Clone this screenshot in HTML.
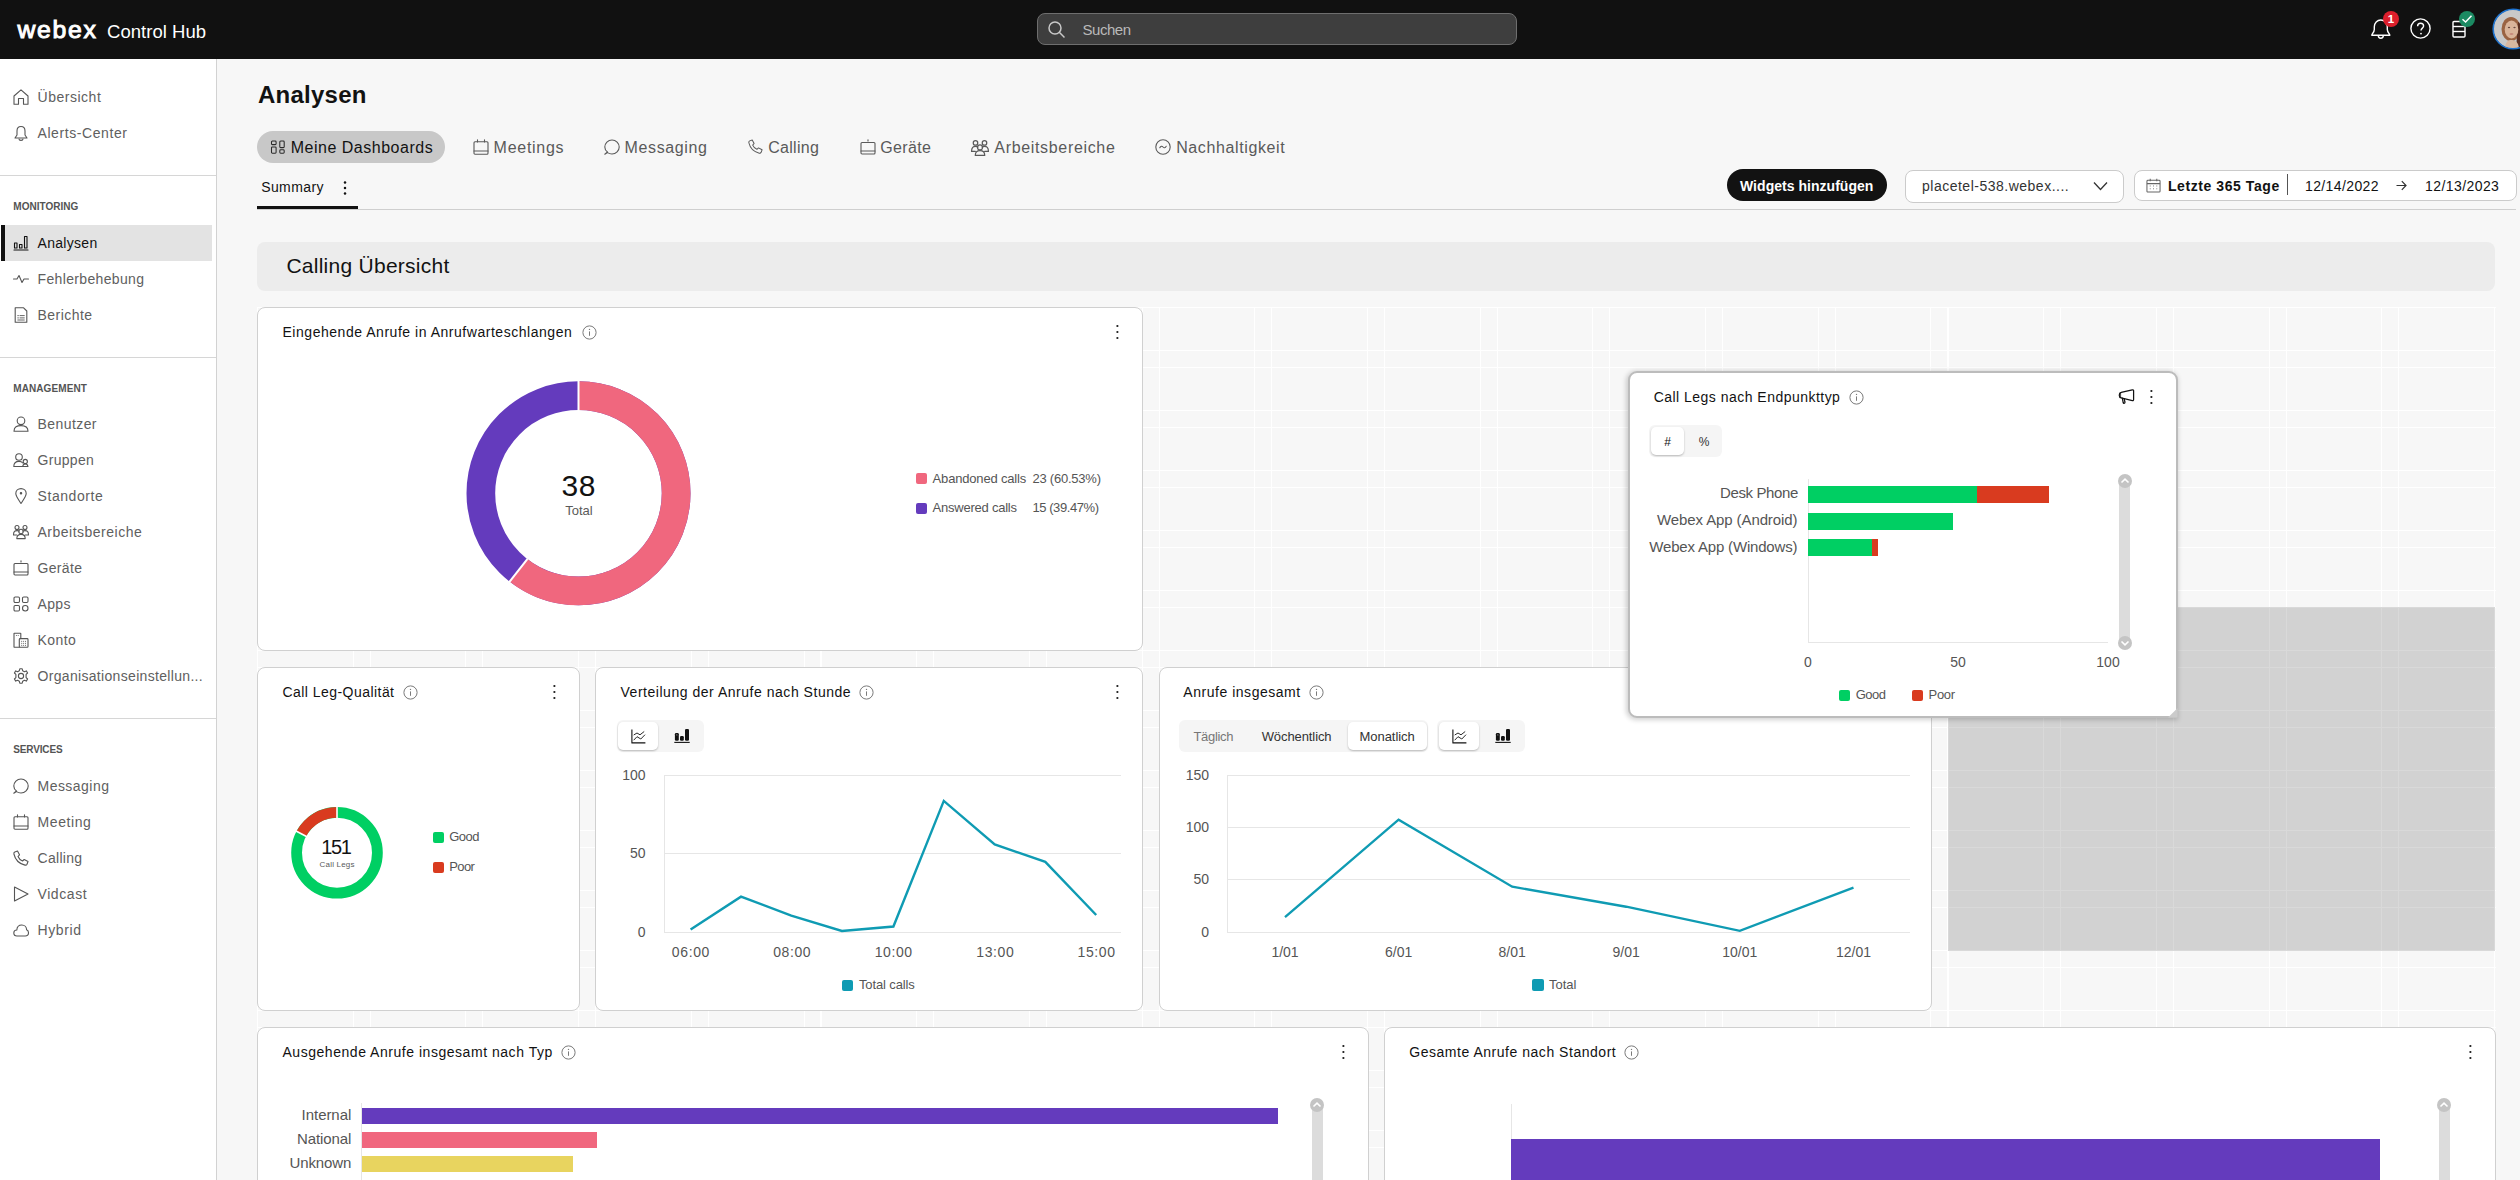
<!DOCTYPE html>
<html><head><meta charset="utf-8"><title>Webex Control Hub</title>
<style>
html,body{margin:0;padding:0;}
body{width:2520px;height:1180px;overflow:hidden;position:relative;background:#f7f7f7;font-family:"Liberation Sans",sans-serif;}
.t{position:absolute;white-space:nowrap;}
.a{position:absolute;box-sizing:border-box;}
svg{position:absolute;overflow:visible;}
</style></head><body>

<div class="a" style="left:0;top:0;width:2520px;height:59px;background:#111111;z-index:2"></div>
<div class="a" style="left:1037px;top:13px;width:480px;height:32px;background:#3e3e3e;border:1px solid #6e6e6e;border-radius:8px;z-index:3"></div>
<svg style="left:1048px;top:21px;z-index:4" width="18" height="17" viewBox="0 0 18 17"><circle cx="7" cy="7" r="6" fill="none" stroke="#c8c8c8" stroke-width="1.5"/><line x1="11.3" y1="11.3" x2="16.5" y2="16.5" stroke="#c8c8c8" stroke-width="1.5"/></svg>
<svg style="left:2370px;top:18px;z-index:4" width="22" height="22" viewBox="0 0 22 22">
<path d="M1.8 17.2 C1.8 16 4.3 14.2 4.3 11.5 L4.3 8.8 C4.3 4.8 7.2 2 10.8 2 C14.4 2 17.3 4.8 17.3 8.8 L17.3 11.5 C17.3 14.2 19.8 16 19.8 17.2 Z" fill="none" stroke="#fff" stroke-width="1.4" stroke-linejoin="round"/>
<path d="M8.3 17.6 C8.3 21.2 13.3 21.2 13.3 17.6" fill="none" stroke="#fff" stroke-width="1.4"/></svg>
<div class="a" style="left:2383px;top:11px;width:16px;height:16px;border-radius:50%;background:#dc1f2c;z-index:5"></div>
<svg style="left:2410px;top:18px;z-index:4" width="22" height="22" viewBox="0 0 22 22">
<circle cx="10.5" cy="10.5" r="9.6" fill="none" stroke="#fff" stroke-width="1.4"/>
<path d="M7.6 8.2 C7.6 6.3 9 5.2 10.6 5.2 C12.3 5.2 13.6 6.4 13.6 8 C13.6 10 11 10.3 11 12.6" fill="none" stroke="#fff" stroke-width="1.4"/>
<circle cx="11" cy="15.6" r="0.9" fill="#fff"/></svg>
<svg style="left:2452px;top:20px;z-index:4" width="15" height="19" viewBox="0 0 15 19">
<rect x="1" y="1.5" width="12" height="15.5" rx="1" fill="none" stroke="#fff" stroke-width="1.4"/>
<line x1="1" y1="6.5" x2="13" y2="6.5" stroke="#fff" stroke-width="1.4"/><line x1="1" y1="11.5" x2="13" y2="11.5" stroke="#fff" stroke-width="1.4"/></svg>
<div class="a" style="left:2459px;top:11px;width:16px;height:16px;border-radius:50%;background:#1b8a62;z-index:5"></div>
<svg style="left:2459px;top:11px;z-index:6" width="16" height="16" viewBox="0 0 16 16"><path d="M3.5 8.2 L6.6 11 L12.5 4.8" fill="none" stroke="#fff" stroke-width="1.5"/></svg>
<svg style="left:2492px;top:8px;z-index:4" width="42" height="42" viewBox="0 0 42 42">
<defs><clipPath id="avc"><circle cx="21" cy="21" r="19.5"/></clipPath></defs>
<g clip-path="url(#avc)">
<rect x="0" y="0" width="42" height="42" fill="#c9c9c9"/>
<ellipse cx="19" cy="21" rx="9.5" ry="12" fill="#9a6342"/>
<path d="M26 14 C31 16 32 26 30 42 L24 42 Z" fill="#5a2f22"/>
<path d="M13 42 C13 34 16 32 19 32 C23 32 27 34 27 42 Z" fill="#d8b8a0"/>
<ellipse cx="19.5" cy="21.5" rx="6.8" ry="9" fill="#d9b49a"/>
<ellipse cx="17" cy="19.5" rx="1.2" ry="0.7" fill="#6a4a40"/><ellipse cx="22.5" cy="19.5" rx="1.2" ry="0.7" fill="#6a4a40"/>
<ellipse cx="19.5" cy="26" rx="2" ry="0.8" fill="#c07a70"/>
</g>
<circle cx="21" cy="21" r="19.8" fill="none" stroke="#1f74d0" stroke-width="1.6"/>
</svg>
<div class="a" style="left:0;top:59px;width:217px;height:1121px;background:#ffffff;border-right:1px solid #d2d2d2;z-index:1"></div>
<div class="a" style="left:0;top:175px;width:216px;height:1px;background:#d6d6d6;z-index:2"></div>
<div class="a" style="left:0;top:357px;width:216px;height:1px;background:#d6d6d6;z-index:2"></div>
<div class="a" style="left:0;top:718px;width:216px;height:1px;background:#d6d6d6;z-index:2"></div>
<div class="a" style="left:5px;top:225px;width:207px;height:36px;background:#e3e3e3;z-index:2"></div>
<div class="a" style="left:1px;top:225px;width:4px;height:36px;background:#111;z-index:3"></div>
<svg style="left:13px;top:89px;z-index:3" width="16" height="16" viewBox="0 0 16 16" fill="none" stroke="#555" stroke-width="1.1" stroke-linejoin="round" stroke-linecap="round"><path d="M1 7 L8 0.8 L15 7 L15 15.2 L10.5 15.2 L10.5 9.5 L5.5 9.5 L5.5 15.2 L1 15.2 Z"/></svg>
<svg style="left:13px;top:125px;z-index:3" width="16" height="16" viewBox="0 0 16 16" fill="none" stroke="#555" stroke-width="1.1" stroke-linejoin="round" stroke-linecap="round"><path d="M2 13 L4 10 L4 6 C4 3.3 5.8 1.5 8 1.5 C10.2 1.5 12 3.3 12 6 L12 10 L14 13 Z"/><path d="M6 14 C6 15.8 10 15.8 10 14"/></svg>
<svg style="left:13px;top:235px;z-index:3" width="16" height="16" viewBox="0 0 16 16" fill="none" stroke="#121212" stroke-width="1.1" stroke-linejoin="round" stroke-linecap="round"><path d="M1 15 L15 15"/><rect x="1.5" y="8" width="2.5" height="5"/><rect x="6.5" y="9.5" width="2.5" height="3.5"/><rect x="11.5" y="1.5" width="2.5" height="11.5"/></svg>
<svg style="left:13px;top:271px;z-index:3" width="16" height="16" viewBox="0 0 16 16" fill="none" stroke="#555" stroke-width="1.1" stroke-linejoin="round" stroke-linecap="round"><path d="M0.5 8 L4 8 L6 4.5 L9 11.5 L11 8 L15.5 8"/></svg>
<svg style="left:13px;top:307px;z-index:3" width="16" height="16" viewBox="0 0 16 16" fill="none" stroke="#555" stroke-width="1.1" stroke-linejoin="round" stroke-linecap="round"><path d="M2.2 0.8 L10.6 0.8 L13.8 4 L13.8 15.2 L2.2 15.2 Z"/><path d="M4.8 8.6 L5.4 8.6 M7 8.6 L11.3 8.6 M4.8 10.9 L5.4 10.9 M7 10.9 L11.3 10.9 M4.8 13 L11.3 13" stroke-width="0.9"/></svg>
<svg style="left:13px;top:416px;z-index:3" width="16" height="16" viewBox="0 0 16 16" fill="none" stroke="#555" stroke-width="1.1" stroke-linejoin="round" stroke-linecap="round"><circle cx="8" cy="4.8" r="3.8"/><path d="M1 15.2 C1 11 4 9.6 8 9.6 C12 9.6 15 11 15 15.2 Z"/></svg>
<svg style="left:13px;top:452px;z-index:3" width="16" height="16" viewBox="0 0 16 16" fill="none" stroke="#555" stroke-width="1.1" stroke-linejoin="round" stroke-linecap="round"><circle cx="6" cy="5" r="3.3"/><path d="M0.8 14.5 C0.8 10.8 3 9.4 6 9.4 C8 9.4 9 10 9.8 11 M0.8 14.5 L14.8 14.5"/><circle cx="12.3" cy="9.5" r="2.1"/><path d="M9.8 14.5 C9.8 12.6 10.8 12 12.3 12 C13.8 12 14.8 12.6 14.8 14.5"/></svg>
<svg style="left:13px;top:488px;z-index:3" width="16" height="16" viewBox="0 0 16 16" fill="none" stroke="#555" stroke-width="1.1" stroke-linejoin="round" stroke-linecap="round"><path d="M8 15.5 C5 11 2.8 8 2.8 5.5 C2.8 2.6 5.2 0.6 8 0.6 C10.8 0.6 13.2 2.6 13.2 5.5 C13.2 8 11 11 8 15.5 Z"/><circle cx="8" cy="5.3" r="0.7" fill="#555"/></svg>
<svg style="left:13px;top:524px;z-index:3" width="16" height="16" viewBox="0 0 16 16" fill="none" stroke="#555" stroke-width="1.1" stroke-linejoin="round" stroke-linecap="round"><circle cx="4" cy="3.5" r="2"/><circle cx="12" cy="3.5" r="2"/><circle cx="8" cy="7.5" r="2.2"/><path d="M0.5 11 C0.5 7.5 2 6.6 4 6.6 C5 6.6 5.6 6.8 6 7.2 M15.5 11 C15.5 7.5 14 6.6 12 6.6 C11 6.6 10.4 6.8 10 7.2 M3.8 14.6 C3.8 11.5 5.5 10.4 8 10.4 C10.5 10.4 12.2 11.5 12.2 14.6 Z M0.5 11 L3.8 11 M12.2 11 L15.5 11"/></svg>
<svg style="left:13px;top:560px;z-index:3" width="16" height="16" viewBox="0 0 16 16" fill="none" stroke="#555" stroke-width="1.1" stroke-linejoin="round" stroke-linecap="round"><rect x="1" y="3.5" width="14" height="11.5" rx="1"/><path d="M1 12 L15 12 M8 0.8 L8 2"/></svg>
<svg style="left:13px;top:596px;z-index:3" width="16" height="16" viewBox="0 0 16 16" fill="none" stroke="#555" stroke-width="1.1" stroke-linejoin="round" stroke-linecap="round"><rect x="1" y="1" width="5.5" height="5.5" rx="1.2"/><rect x="9.5" y="1" width="5.5" height="5.5" rx="1.2"/><rect x="1" y="9.5" width="5.5" height="5.5" rx="1.2"/><rect x="9.5" y="9.5" width="5.5" height="5.5" rx="2.7"/></svg>
<svg style="left:13px;top:632px;z-index:3" width="16" height="16" viewBox="0 0 16 16" fill="none" stroke="#555" stroke-width="1.1" stroke-linejoin="round" stroke-linecap="round"><path d="M6.3 15.2 L1.3 15.2 Q1 15.2 1 14.9 L1 1.5 Q1 1.2 1.3 1.2 L7.4 1.2 Q7.8 1.2 7.8 1.6 L7.8 6.6"/><rect x="6.3" y="6.6" width="8.7" height="8.6" rx="0.8"/><circle cx="8.7" cy="9.3" r="0.55" fill="#555" stroke="none"/><circle cx="10.6" cy="9.3" r="0.55" fill="#555" stroke="none"/><circle cx="12.5" cy="9.3" r="0.55" fill="#555" stroke="none"/><circle cx="8.7" cy="11.3" r="0.55" fill="#555" stroke="none"/><circle cx="10.6" cy="11.3" r="0.55" fill="#555" stroke="none"/><circle cx="12.5" cy="11.3" r="0.55" fill="#555" stroke="none"/><circle cx="8.7" cy="13.2" r="0.55" fill="#555" stroke="none"/><circle cx="10.6" cy="13.2" r="0.55" fill="#555" stroke="none"/><circle cx="12.5" cy="13.2" r="0.55" fill="#555" stroke="none"/><circle cx="3.4" cy="3.6" r="0.5" fill="#555" stroke="none"/><circle cx="5.2" cy="3.6" r="0.5" fill="#555" stroke="none"/></svg>
<svg style="left:13px;top:668px;z-index:3" width="16" height="16" viewBox="0 0 16 16" fill="none" stroke="#555" stroke-width="1.1" stroke-linejoin="round" stroke-linecap="round"><circle cx="8" cy="8" r="2.6"/><path d="M6.8 0.8 L9.2 0.8 L9.7 2.8 L11.4 3.7 L13.3 2.9 L14.6 5 L13.1 6.4 L13.1 9.6 L14.6 11 L13.3 13.1 L11.4 12.3 L9.7 13.2 L9.2 15.2 L6.8 15.2 L6.3 13.2 L4.6 12.3 L2.7 13.1 L1.4 11 L2.9 9.6 L2.9 6.4 L1.4 5 L2.7 2.9 L4.6 3.7 L6.3 2.8 Z"/></svg>
<svg style="left:13px;top:778px;z-index:3" width="16" height="16" viewBox="0 0 16 16" fill="none" stroke="#555" stroke-width="1.1" stroke-linejoin="round" stroke-linecap="round"><path d="M3.5 13 C1.8 11.8 0.8 10 0.8 8 C0.8 4.2 4 1 8 1 C12 1 15.2 4.2 15.2 8 C15.2 11.8 12 15 8 15 C6.5 15 5 14.6 3.5 13.6 L0.8 15.2 Z"/></svg>
<svg style="left:13px;top:814px;z-index:3" width="16" height="16" viewBox="0 0 16 16" fill="none" stroke="#555" stroke-width="1.1" stroke-linejoin="round" stroke-linecap="round"><rect x="1" y="2.8" width="14" height="12.4" rx="1"/><path d="M1 12 L15 12 M4.5 0.8 L4.5 3 M11.5 0.8 L11.5 3"/></svg>
<svg style="left:13px;top:850px;z-index:3" width="16" height="16" viewBox="0 0 16 16" fill="none" stroke="#555" stroke-width="1.1" stroke-linejoin="round" stroke-linecap="round"><path d="M4.5 1 L6.5 4.8 L5 6.5 C6 8.8 7.4 10.2 9.5 11 L11.2 9.5 L15 11.5 L14 14.2 C13.6 15 12.8 15.3 12 15.1 C6.5 13.8 2.2 9.5 0.9 4 C0.7 3.2 1 2.4 1.8 2 Z"/></svg>
<svg style="left:13px;top:886px;z-index:3" width="16" height="16" viewBox="0 0 16 16" fill="none" stroke="#555" stroke-width="1.1" stroke-linejoin="round" stroke-linecap="round"><path d="M1.5 1 L15 8 L1.5 15 Z"/></svg>
<svg style="left:13px;top:922px;z-index:3" width="16" height="16" viewBox="0 0 16 16" fill="none" stroke="#555" stroke-width="1.1" stroke-linejoin="round" stroke-linecap="round"><path d="M4 14 C2 14 0.8 12.6 0.8 11 C0.8 9.3 2 8 3.8 8 C4 5 6 3 8.8 3 C11.6 3 13.6 5.2 13.6 7.8 C14.8 8.3 15.5 9.4 15.5 10.8 C15.5 12.6 14 14 12.2 14 Z"/></svg>
<div class="a" style="left:257px;top:131px;width:188px;height:32px;border-radius:16px;background:#c8c8c8;z-index:2"></div>
<svg style="left:270px;top:140px;z-index:3" width="15" height="14" viewBox="0 0 15 14" fill="none" stroke="#2a2a2a" stroke-width="1.05"><rect x="1.5" y="1" width="4.6" height="3.6" rx="0.9"/><rect x="9.8" y="1" width="4.4" height="6.6" rx="0.9"/><rect x="1.5" y="6.9" width="4.6" height="6.3" rx="0.9"/><rect x="9.8" y="9.8" width="4.4" height="3.4" rx="0.9"/></svg>
<svg style="left:472.5px;top:139px;z-index:3" width="16" height="16" viewBox="0 0 16 16" fill="none" stroke="#5a5a5a" stroke-width="1.1" stroke-linejoin="round" stroke-linecap="round"><rect x="1" y="2.8" width="14" height="12.4" rx="1"/><path d="M1 12 L15 12 M4.5 0.8 L4.5 3 M11.5 0.8 L11.5 3"/></svg>
<svg style="left:603.8px;top:139px;z-index:3" width="16" height="16" viewBox="0 0 16 16" fill="none" stroke="#5a5a5a" stroke-width="1.1" stroke-linejoin="round" stroke-linecap="round"><path d="M3.5 13 C1.8 11.8 0.8 10 0.8 8 C0.8 4.2 4 1 8 1 C12 1 15.2 4.2 15.2 8 C15.2 11.8 12 15 8 15 C6.5 15 5 14.6 3.5 13.6 L0.8 15.2 Z"/></svg>
<svg style="left:747.5px;top:139px;z-index:3" width="15" height="15" viewBox="0 0 16 16" fill="none" stroke="#5a5a5a" stroke-width="1.1" stroke-linejoin="round" stroke-linecap="round"><path d="M4.5 1 L6.5 4.8 L5 6.5 C6 8.8 7.4 10.2 9.5 11 L11.2 9.5 L15 11.5 L14 14.2 C13.6 15 12.8 15.3 12 15.1 C6.5 13.8 2.2 9.5 0.9 4 C0.7 3.2 1 2.4 1.8 2 Z"/></svg>
<svg style="left:859.8px;top:139px;z-index:3" width="16" height="16" viewBox="0 0 16 16" fill="none" stroke="#5a5a5a" stroke-width="1.1" stroke-linejoin="round" stroke-linecap="round"><rect x="1" y="3.5" width="14" height="11.5" rx="1"/><path d="M1 12 L15 12 M8 0.8 L8 2"/></svg>
<svg style="left:971.4px;top:139px;z-index:3" width="18" height="18" viewBox="0 0 16 16" fill="none" stroke="#5a5a5a" stroke-width="1.1" stroke-linejoin="round" stroke-linecap="round"><circle cx="4" cy="3.5" r="2"/><circle cx="12" cy="3.5" r="2"/><circle cx="8" cy="7.5" r="2.2"/><path d="M0.5 11 C0.5 7.5 2 6.6 4 6.6 C5 6.6 5.6 6.8 6 7.2 M15.5 11 C15.5 7.5 14 6.6 12 6.6 C11 6.6 10.4 6.8 10 7.2 M3.8 14.6 C3.8 11.5 5.5 10.4 8 10.4 C10.5 10.4 12.2 11.5 12.2 14.6 Z M0.5 11 L3.8 11 M12.2 11 L15.5 11"/></svg>
<svg style="left:1155px;top:139px;z-index:3" width="16" height="16" viewBox="0 0 16 16" fill="none" stroke="#5a5a5a" stroke-width="1.1" stroke-linejoin="round" stroke-linecap="round"><circle cx="8" cy="8" r="7.2"/><path d="M4.8 8.8 C5.8 6.8 7 6.8 8 8 C9 9.2 10.2 9.2 11.2 7.2"/></svg>
<svg style="left:343px;top:181px;z-index:3" width="4" height="14" viewBox="0 0 4 14"><circle cx="2" cy="1.6" r="1.25" fill="#121212"/><circle cx="2" cy="7" r="1.25" fill="#121212"/><circle cx="2" cy="12.4" r="1.25" fill="#121212"/></svg>
<div class="a" style="left:257px;top:209px;width:2259px;height:1px;background:#cfcfcf;z-index:2"></div>
<div class="a" style="left:257px;top:206px;width:101px;height:3px;background:#121212;z-index:3"></div>
<div class="a" style="left:1727px;top:169px;width:160px;height:32px;border-radius:16px;background:#121212;z-index:2"></div>
<div class="a" style="left:1905px;top:169.5px;width:219px;height:33px;border-radius:8px;background:#fff;border:1px solid #cbcbcb;z-index:2"></div>
<svg style="left:2093px;top:181px;z-index:3" width="15" height="10" viewBox="0 0 15 10"><path d="M1 1.5 L7.5 8.5 L14 1.5" fill="none" stroke="#333" stroke-width="1.3"/></svg>
<div class="a" style="left:2133.5px;top:169.5px;width:383px;height:31.5px;border-radius:8px;background:#fff;border:1px solid #cbcbcb;z-index:2"></div>
<svg style="left:2145.5px;top:178px;z-index:3" width="15" height="15" viewBox="0 0 16 16" fill="none" stroke="#666" stroke-width="1.1"><rect x="1" y="2.5" width="14" height="12.5" rx="1"/><path d="M1 6 L15 6 M4.5 0.8 L4.5 3.5 M11.5 0.8 L11.5 3.5"/><path d="M4 8.5h1 M7.5 8.5h1 M11 8.5h1 M4 11.5h1 M7.5 11.5h1 M11 11.5h1" stroke-width="0.9"/></svg>
<div class="a" style="left:2287px;top:174px;width:1px;height:21px;background:#555;z-index:3"></div>
<svg style="left:2396px;top:180px;z-index:3" width="11" height="11" viewBox="0 0 11 11"><path d="M0.5 5.5 L10 5.5 M5.8 1.2 L10 5.5 L5.8 9.8" fill="none" stroke="#333" stroke-width="1.2"/></svg>
<div class="a" style="left:257px;top:242px;width:2238px;height:49px;border-radius:8px;background:#ececec;z-index:2"></div>
<div class="a" style="left:257px;top:307px;width:2239.0px;height:873px;z-index:2;
background-image:repeating-linear-gradient(to right,#ffffff 0 1px,transparent 1px 95.7px,#ffffff 95.7px 96.7px,transparent 96.7px 112.7px),
repeating-linear-gradient(to bottom,#ffffff 0 1px,transparent 1px 43px,#ffffff 43px 44px,transparent 44px 60px);"></div>
<div class="a" style="left:1947.5px;top:607px;width:547.5px;height:344px;background:rgba(0,0,0,0.15);z-index:3"></div>
<div class="a" style="left:257.0px;top:307px;width:886.3000000000001px;height:344px;background:#fff;border:1px solid #d0d0d0;border-radius:8px;z-index:4"></div>
<svg style="left:581.5px;top:324.5px;z-index:6" width="15" height="15" viewBox="0 0 15 15"><circle cx="7.5" cy="7.5" r="6.6" fill="none" stroke="#7a7a7a" stroke-width="1"/><path d="M7.5 6.4 L7.5 10.8" stroke="#7a7a7a" stroke-width="1"/><circle cx="7.5" cy="4.4" r="0.7" fill="#7a7a7a"/></svg>
<svg style="left:1116.0px;top:325px;z-index:6" width="3" height="14" viewBox="0 0 3 14"><rect x="0.5" y="0.1" width="1.8" height="1.8" fill="#121212"/><rect x="0.5" y="6.1" width="1.8" height="1.8" fill="#121212"/><rect x="0.5" y="12.1" width="1.8" height="1.8" fill="#121212"/></svg>
<svg style="left:466px;top:381px;z-index:6" width="225" height="225" viewBox="0 0 225 225">
<g transform="rotate(-90 112.5 112.3)">
<circle cx="112.5" cy="112.3" r="97.65" fill="none" stroke="#643bbd" stroke-width="28.7"/>
<circle cx="112.5" cy="112.3" r="97.65" fill="none" stroke="#f0677e" stroke-width="28.7" stroke-dasharray="371.38 613.55"/>
</g>
<line x1="112.5" y1="0" x2="112.5" y2="30" stroke="#fff" stroke-width="2"/>
<line x1="61.51" y1="177.79" x2="43.07" y2="201.46" stroke="#fff" stroke-width="2"/>
</svg>
<div class="a" style="left:915.8px;top:473.4px;width:11px;height:11px;border-radius:2px;background:#f0677e;z-index:6"></div>
<div class="a" style="left:915.8px;top:503.3px;width:11px;height:11px;border-radius:2px;background:#643bbd;z-index:6"></div>
<div class="a" style="left:257.0px;top:667px;width:322.8px;height:344px;background:#fff;border:1px solid #d0d0d0;border-radius:8px;z-index:4"></div>
<svg style="left:402.5px;top:684.5px;z-index:6" width="15" height="15" viewBox="0 0 15 15"><circle cx="7.5" cy="7.5" r="6.6" fill="none" stroke="#7a7a7a" stroke-width="1"/><path d="M7.5 6.4 L7.5 10.8" stroke="#7a7a7a" stroke-width="1"/><circle cx="7.5" cy="4.4" r="0.7" fill="#7a7a7a"/></svg>
<svg style="left:552.5px;top:685px;z-index:6" width="3" height="14" viewBox="0 0 3 14"><rect x="0.5" y="0.1" width="1.8" height="1.8" fill="#121212"/><rect x="0.5" y="6.1" width="1.8" height="1.8" fill="#121212"/><rect x="0.5" y="12.1" width="1.8" height="1.8" fill="#121212"/></svg>
<svg style="left:290px;top:806px;z-index:6" width="94" height="94" viewBox="0 0 94 94">
<g transform="rotate(-90 47 46.8)">
<circle cx="47" cy="46.8" r="40.4" fill="none" stroke="#00cf63" stroke-width="10.8"/>
<circle cx="47" cy="46.8" r="40.4" fill="none" stroke="#d93b1f" stroke-width="10.8" stroke-dasharray="43.71 253.84" transform="rotate(298.01 47 46.8)"/>
</g>
<line x1="47" y1="0" x2="47" y2="13" stroke="#fff" stroke-width="1.6"/>
<line x1="16.98" y1="30.83" x2="5.51" y2="24.73" stroke="#fff" stroke-width="1.6"/>
</svg>
<div class="a" style="left:432.5px;top:832.4px;width:11px;height:11px;border-radius:2px;background:#00cf63;z-index:6"></div>
<div class="a" style="left:432.5px;top:862.3px;width:11px;height:11px;border-radius:2px;background:#d93b1f;z-index:6"></div>
<div class="a" style="left:595.1px;top:667px;width:548.2px;height:344px;background:#fff;border:1px solid #d0d0d0;border-radius:8px;z-index:4"></div>
<svg style="left:859.3px;top:684.5px;z-index:6" width="15" height="15" viewBox="0 0 15 15"><circle cx="7.5" cy="7.5" r="6.6" fill="none" stroke="#7a7a7a" stroke-width="1"/><path d="M7.5 6.4 L7.5 10.8" stroke="#7a7a7a" stroke-width="1"/><circle cx="7.5" cy="4.4" r="0.7" fill="#7a7a7a"/></svg>
<svg style="left:1115.7px;top:685px;z-index:6" width="3" height="14" viewBox="0 0 3 14"><rect x="0.5" y="0.1" width="1.8" height="1.8" fill="#121212"/><rect x="0.5" y="6.1" width="1.8" height="1.8" fill="#121212"/><rect x="0.5" y="12.1" width="1.8" height="1.8" fill="#121212"/></svg>
<div class="a" style="left:616.8px;top:720px;width:87px;height:31.5px;background:#f5f5f5;border-radius:6px;z-index:6"></div>
<div class="a" style="left:618px;top:722px;width:39.7px;height:28px;background:#fff;border-radius:5px;box-shadow:0 1px 2px rgba(0,0,0,0.25);z-index:7"></div>
<svg style="left:630.5px;top:728.5px;z-index:8" width="16" height="16" viewBox="0 0 16 16" fill="none" stroke="#121212" stroke-linejoin="round"><path d="M0.9 0.6 L0.9 13.9 L14.4 13.9" stroke-width="1.1"/><path d="M2.7 6 L6 4 L9 5.8 L13.2 2.5 M2.7 11.2 L6 7.7 L9.8 10 L14 5.7" stroke-width="0.9"/></svg>
<svg style="left:674px;top:728px;z-index:8" width="16" height="16" viewBox="0 0 16 16" fill="none" stroke="#121212" stroke-linejoin="round"><path d="M0.3 14.4 L15.7 14.4" stroke-width="1.1"/><rect x="0.9" y="5" width="3.9" height="7.8" rx="1.2" fill="#121212" stroke="none"/><circle cx="2.85" cy="6.9" r="0.9" fill="#fff"/><rect x="6" y="8" width="3.8" height="4.8" rx="1.2" fill="#121212" stroke="none"/><rect x="11" y="0.9" width="4" height="11.9" rx="1.2" fill="#121212" stroke="none"/></svg>
<div class="a" style="left:664.5px;top:774.8px;width:456.70000000000005px;height:1px;background:#e6e6e6;z-index:6"></div>
<div class="a" style="left:664.5px;top:853.1px;width:456.70000000000005px;height:1px;background:#e6e6e6;z-index:6"></div>
<div class="a" style="left:664.5px;top:931.5px;width:456.70000000000005px;height:1px;background:#e6e6e6;z-index:6"></div>
<div class="a" style="left:664px;top:775px;width:1px;height:157.5px;background:#e6e6e6;z-index:6"></div>
<svg style="left:0;top:0;z-index:7" width="2520" height="1180"><polyline points="690.6,929.5 741,896.7 791.3,915.6 841.9,931 893.4,926.5 943.8,800.9 994.7,844.5 1045.3,861.9 1096.2,915" fill="none" stroke="#0f9bb3" stroke-width="2.4" stroke-linejoin="miter"/></svg>
<div class="a" style="left:841.6px;top:979.5px;width:11.5px;height:11.5px;border-radius:2px;background:#0f9bb3;z-index:6"></div>
<div class="a" style="left:1158.6px;top:667px;width:773.6px;height:344px;background:#fff;border:1px solid #d0d0d0;border-radius:8px;z-index:4"></div>
<svg style="left:1309.4px;top:684.5px;z-index:6" width="15" height="15" viewBox="0 0 15 15"><circle cx="7.5" cy="7.5" r="6.6" fill="none" stroke="#7a7a7a" stroke-width="1"/><path d="M7.5 6.4 L7.5 10.8" stroke="#7a7a7a" stroke-width="1"/><circle cx="7.5" cy="4.4" r="0.7" fill="#7a7a7a"/></svg>
<div class="a" style="left:1179.2px;top:720.3px;width:249px;height:31.7px;background:#f5f5f5;border-radius:6px;z-index:6"></div>
<div class="a" style="left:1348px;top:721.8px;width:78.8px;height:28.5px;background:#fff;border-radius:5px;box-shadow:0 1px 2px rgba(0,0,0,0.25);z-index:7"></div>
<div class="a" style="left:1437.3px;top:720.3px;width:87.3px;height:31.7px;background:#f5f5f5;border-radius:6px;z-index:6"></div>
<div class="a" style="left:1439px;top:721.8px;width:39.6px;height:28.5px;background:#fff;border-radius:5px;box-shadow:0 1px 2px rgba(0,0,0,0.25);z-index:7"></div>
<svg style="left:1451.5px;top:728.5px;z-index:8" width="16" height="16" viewBox="0 0 16 16" fill="none" stroke="#121212" stroke-linejoin="round"><path d="M0.9 0.6 L0.9 13.9 L14.4 13.9" stroke-width="1.1"/><path d="M2.7 6 L6 4 L9 5.8 L13.2 2.5 M2.7 11.2 L6 7.7 L9.8 10 L14 5.7" stroke-width="0.9"/></svg>
<svg style="left:1495.4px;top:728px;z-index:8" width="16" height="16" viewBox="0 0 16 16" fill="none" stroke="#121212" stroke-linejoin="round"><path d="M0.3 14.4 L15.7 14.4" stroke-width="1.1"/><rect x="0.9" y="5" width="3.9" height="7.8" rx="1.2" fill="#121212" stroke="none"/><circle cx="2.85" cy="6.9" r="0.9" fill="#fff"/><rect x="6" y="8" width="3.8" height="4.8" rx="1.2" fill="#121212" stroke="none"/><rect x="11" y="0.9" width="4" height="11.9" rx="1.2" fill="#121212" stroke="none"/></svg>
<div class="a" style="left:1227.5px;top:774.7px;width:682.8px;height:1px;background:#e6e6e6;z-index:6"></div>
<div class="a" style="left:1227.5px;top:827.0px;width:682.8px;height:1px;background:#e6e6e6;z-index:6"></div>
<div class="a" style="left:1227.5px;top:879.3px;width:682.8px;height:1px;background:#e6e6e6;z-index:6"></div>
<div class="a" style="left:1227.5px;top:931.5px;width:682.8px;height:1px;background:#e6e6e6;z-index:6"></div>
<div class="a" style="left:1227px;top:775px;width:1px;height:157.5px;background:#e6e6e6;z-index:6"></div>
<svg style="left:0;top:0;z-index:7" width="2520" height="1180"><polyline points="1285,917.1 1398.6,819.7 1512.2,886.7 1626.2,906.7 1739.8,930.8 1853.5,887.6" fill="none" stroke="#0f9bb3" stroke-width="2.4"/></svg>
<div class="a" style="left:1531.6px;top:979.3px;width:12px;height:12px;border-radius:2px;background:#0f9bb3;z-index:6"></div>
<div class="a" style="left:257.0px;top:1027px;width:1111.7px;height:344px;background:#fff;border:1px solid #d0d0d0;border-radius:8px;z-index:4"></div>
<svg style="left:561px;top:1044.5px;z-index:6" width="15" height="15" viewBox="0 0 15 15"><circle cx="7.5" cy="7.5" r="6.6" fill="none" stroke="#7a7a7a" stroke-width="1"/><path d="M7.5 6.4 L7.5 10.8" stroke="#7a7a7a" stroke-width="1"/><circle cx="7.5" cy="4.4" r="0.7" fill="#7a7a7a"/></svg>
<svg style="left:1341.5px;top:1045px;z-index:6" width="3" height="14" viewBox="0 0 3 14"><rect x="0.5" y="0.1" width="1.8" height="1.8" fill="#121212"/><rect x="0.5" y="6.1" width="1.8" height="1.8" fill="#121212"/><rect x="0.5" y="12.1" width="1.8" height="1.8" fill="#121212"/></svg>
<div class="a" style="left:361px;top:1103px;width:1px;height:77px;background:#e6e6e6;z-index:6"></div>
<div class="a" style="left:362px;top:1108.3000000000002px;width:915.8px;height:15.7px;background:#643bbd;z-index:6"></div>
<div class="a" style="left:362px;top:1132.1000000000001px;width:234.60000000000002px;height:15.7px;background:#f0677e;z-index:6"></div>
<div class="a" style="left:362px;top:1156.3000000000002px;width:210.89999999999998px;height:15.7px;background:#e8d45f;z-index:6"></div>
<div class="a" style="left:1311.9px;top:1098.5px;width:11px;height:161.5px;background:#dcdcdc;border-radius:5px;z-index:6"></div>
<div class="a" style="left:1310.4px;top:1097.5px;width:14px;height:14px;border-radius:50%;background:#c4c4c4;z-index:7"></div>
<svg style="left:1310.4px;top:1097.5px;z-index:8" width="14" height="14" viewBox="0 0 14 14"><path d="M3.5 8.5 L7 5.2 L10.5 8.5" fill="none" stroke="#fff" stroke-width="1.6"/></svg>
<div class="a" style="left:1310.4px;top:1247px;width:14px;height:14px;border-radius:50%;background:#c4c4c4;z-index:7"></div>
<svg style="left:1310.4px;top:1247px;z-index:8" width="14" height="14" viewBox="0 0 14 14"><path d="M3.5 5.5 L7 8.8 L10.5 5.5" fill="none" stroke="#fff" stroke-width="1.6"/></svg>
<div class="a" style="left:1384.0px;top:1027px;width:1111.7px;height:344px;background:#fff;border:1px solid #d0d0d0;border-radius:8px;z-index:4"></div>
<svg style="left:1624.2px;top:1044.5px;z-index:6" width="15" height="15" viewBox="0 0 15 15"><circle cx="7.5" cy="7.5" r="6.6" fill="none" stroke="#7a7a7a" stroke-width="1"/><path d="M7.5 6.4 L7.5 10.8" stroke="#7a7a7a" stroke-width="1"/><circle cx="7.5" cy="4.4" r="0.7" fill="#7a7a7a"/></svg>
<svg style="left:2468.7px;top:1045px;z-index:6" width="3" height="14" viewBox="0 0 3 14"><rect x="0.5" y="0.1" width="1.8" height="1.8" fill="#121212"/><rect x="0.5" y="6.1" width="1.8" height="1.8" fill="#121212"/><rect x="0.5" y="12.1" width="1.8" height="1.8" fill="#121212"/></svg>
<div class="a" style="left:1510.5px;top:1103.5px;width:1px;height:77px;background:#e6e6e6;z-index:6"></div>
<div class="a" style="left:1511px;top:1139px;width:869px;height:60px;background:#643bbd;z-index:6"></div>
<div class="a" style="left:2438.5px;top:1098.5px;width:11px;height:161.5px;background:#dcdcdc;border-radius:5px;z-index:6"></div>
<div class="a" style="left:2437.0px;top:1097.5px;width:14px;height:14px;border-radius:50%;background:#c4c4c4;z-index:7"></div>
<svg style="left:2437.0px;top:1097.5px;z-index:8" width="14" height="14" viewBox="0 0 14 14"><path d="M3.5 8.5 L7 5.2 L10.5 8.5" fill="none" stroke="#fff" stroke-width="1.6"/></svg>
<div class="a" style="left:2437.0px;top:1247px;width:14px;height:14px;border-radius:50%;background:#c4c4c4;z-index:7"></div>
<svg style="left:2437.0px;top:1247px;z-index:8" width="14" height="14" viewBox="0 0 14 14"><path d="M3.5 5.5 L7 8.8 L10.5 5.5" fill="none" stroke="#fff" stroke-width="1.6"/></svg>
<div class="a" style="left:1628px;top:370.7px;width:550.2px;height:347.4px;background:#fff;border:2px solid #bcbcbc;border-radius:9px 9px 0 9px;box-shadow:-1px 1px 5px 1px rgba(0,0,0,0.18);z-index:20"></div>
<svg style="left:1848.5px;top:389.5px;z-index:22" width="15" height="15" viewBox="0 0 15 15"><circle cx="7.5" cy="7.5" r="6.6" fill="none" stroke="#7a7a7a" stroke-width="1"/><path d="M7.5 6.4 L7.5 10.8" stroke="#7a7a7a" stroke-width="1"/><circle cx="7.5" cy="4.4" r="0.7" fill="#7a7a7a"/></svg>
<svg style="left:2117px;top:389px;z-index:22" width="19" height="17" viewBox="0 0 19 17" fill="none" stroke="#121212" stroke-width="1.25" stroke-linejoin="round" stroke-linecap="round">
<path d="M4.2 3.4 L15.3 0.8 Q16.6 0.6 16.6 1.8 L16.6 10.6 Q16.6 11.9 15.3 11.6 L4.2 8.9 C1.6 8.4 1.6 3.9 4.2 3.4 Z"/><path d="M3.6 4 L3.6 8.3" stroke-width="0.8"/><path d="M5.3 9.1 L6.2 13.6 Q6.8 14.8 7.7 14.1 Q8.2 13.5 7.8 12.6 L7.2 9.6"/></svg>
<svg style="left:2149.7px;top:390px;z-index:22" width="3" height="14" viewBox="0 0 3 14"><rect x="0.5" y="0.1" width="1.8" height="1.8" fill="#121212"/><rect x="0.5" y="6.1" width="1.8" height="1.8" fill="#121212"/><rect x="0.5" y="12.1" width="1.8" height="1.8" fill="#121212"/></svg>
<div class="a" style="left:1649.3px;top:425.3px;width:73px;height:31.7px;background:#f5f5f5;border-radius:6px;z-index:21"></div>
<div class="a" style="left:1651px;top:427px;width:33px;height:28px;background:#fff;border-radius:5px;box-shadow:0 1px 2px rgba(0,0,0,0.25);z-index:22"></div>
<div class="a" style="left:1807.5px;top:479px;width:1px;height:163.5px;background:#e6e6e6;z-index:21"></div>
<div class="a" style="left:1807.5px;top:641.5px;width:300.5px;height:1px;background:#e6e6e6;z-index:21"></div>
<div class="a" style="left:1808px;top:485.5px;width:168.79999999999995px;height:17px;background:#00cf63;z-index:22"></div>
<div class="a" style="left:1976.8px;top:485.5px;width:72.20000000000005px;height:17px;background:#d93b1f;z-index:22"></div>
<div class="a" style="left:1808px;top:512.5px;width:144.70000000000005px;height:17px;background:#00cf63;z-index:22"></div>
<div class="a" style="left:1808px;top:539.3px;width:63.59999999999991px;height:17px;background:#00cf63;z-index:22"></div>
<div class="a" style="left:1871.6px;top:539.3px;width:6.100000000000136px;height:17px;background:#d93b1f;z-index:22"></div>
<div class="a" style="left:2119px;top:475px;width:11px;height:173.70000000000005px;background:#dcdcdc;border-radius:5px;z-index:22"></div>
<div class="a" style="left:2117.5px;top:474px;width:14px;height:14px;border-radius:50%;background:#c4c4c4;z-index:23"></div>
<svg style="left:2117.5px;top:474px;z-index:24" width="14" height="14" viewBox="0 0 14 14"><path d="M3.5 8.5 L7 5.2 L10.5 8.5" fill="none" stroke="#fff" stroke-width="1.6"/></svg>
<div class="a" style="left:2117.5px;top:635.7px;width:14px;height:14px;border-radius:50%;background:#c4c4c4;z-index:23"></div>
<svg style="left:2117.5px;top:635.7px;z-index:24" width="14" height="14" viewBox="0 0 14 14"><path d="M3.5 5.5 L7 8.8 L10.5 5.5" fill="none" stroke="#fff" stroke-width="1.6"/></svg>
<div class="a" style="left:1839.3px;top:689.5px;width:11px;height:11px;border-radius:2px;background:#00cf63;z-index:22"></div>
<div class="a" style="left:1912px;top:689.5px;width:11px;height:11px;border-radius:2px;background:#d93b1f;z-index:22"></div>
<svg style="left:2168px;top:708px;z-index:23" width="9.7" height="9.6" viewBox="0 0 10 10"><path d="M10 0 L10 10 L0 10 Z" fill="#cbcbcb"/></svg>
<span class="t" style="left:17.50px;top:12.61px;font-size:24.8px;line-height:33px;color:#ffffff;z-index:3;letter-spacing:1.705px;-webkit-text-stroke:1px #ffffff;">webex</span>
<span class="t" style="left:107.00px;top:19.09px;font-size:18.5px;line-height:25px;color:#ffffff;z-index:3;letter-spacing:0.029px;">Control Hub</span>
<span class="t" style="left:1082.50px;top:20.30px;font-size:15px;line-height:20px;color:#b9b9b9;z-index:4;letter-spacing:-0.475px;">Suchen</span>
<span class="t" style="left:2387.80px;top:12.32px;font-size:11.5px;line-height:15px;color:#ffffff;z-index:6;font-weight:700;">1</span>
<span class="t" style="left:37.50px;top:87.95px;font-size:14px;line-height:19px;color:#606060;z-index:3;letter-spacing:0.521px;">Übersicht</span>
<span class="t" style="left:37.50px;top:123.95px;font-size:14px;line-height:19px;color:#606060;z-index:3;letter-spacing:0.586px;">Alerts-Center</span>
<span class="t" style="left:13.30px;top:200.23px;font-size:10px;line-height:13px;color:#545454;z-index:3;font-weight:700;letter-spacing:0.021px;">MONITORING</span>
<span class="t" style="left:37.50px;top:233.95px;font-size:14px;line-height:19px;color:#121212;z-index:3;letter-spacing:0.301px;">Analysen</span>
<span class="t" style="left:37.50px;top:269.95px;font-size:14px;line-height:19px;color:#606060;z-index:3;letter-spacing:0.348px;">Fehlerbehebung</span>
<span class="t" style="left:37.50px;top:305.95px;font-size:14px;line-height:19px;color:#606060;z-index:3;letter-spacing:0.449px;">Berichte</span>
<span class="t" style="left:13.30px;top:382.24px;font-size:10px;line-height:13px;color:#545454;z-index:3;font-weight:700;letter-spacing:0.081px;">MANAGEMENT</span>
<span class="t" style="left:37.50px;top:414.95px;font-size:14px;line-height:19px;color:#606060;z-index:3;letter-spacing:0.424px;">Benutzer</span>
<span class="t" style="left:37.50px;top:450.95px;font-size:14px;line-height:19px;color:#606060;z-index:3;letter-spacing:0.303px;">Gruppen</span>
<span class="t" style="left:37.50px;top:486.95px;font-size:14px;line-height:19px;color:#606060;z-index:3;letter-spacing:0.574px;">Standorte</span>
<span class="t" style="left:37.50px;top:522.95px;font-size:14px;line-height:19px;color:#606060;z-index:3;letter-spacing:0.495px;">Arbeitsbereiche</span>
<span class="t" style="left:37.50px;top:558.95px;font-size:14px;line-height:19px;color:#606060;z-index:3;letter-spacing:0.340px;">Geräte</span>
<span class="t" style="left:37.50px;top:594.95px;font-size:14px;line-height:19px;color:#606060;z-index:3;letter-spacing:0.363px;">Apps</span>
<span class="t" style="left:37.50px;top:630.95px;font-size:14px;line-height:19px;color:#606060;z-index:3;letter-spacing:0.454px;">Konto</span>
<span class="t" style="left:37.50px;top:666.95px;font-size:14px;line-height:19px;color:#606060;z-index:3;letter-spacing:0.320px;">Organisationseinstellun...</span>
<span class="t" style="left:13.30px;top:743.24px;font-size:10px;line-height:13px;color:#545454;z-index:3;font-weight:700;letter-spacing:-0.156px;">SERVICES</span>
<span class="t" style="left:37.50px;top:776.95px;font-size:14px;line-height:19px;color:#606060;z-index:3;letter-spacing:0.475px;">Messaging</span>
<span class="t" style="left:37.50px;top:812.95px;font-size:14px;line-height:19px;color:#606060;z-index:3;letter-spacing:0.599px;">Meeting</span>
<span class="t" style="left:37.50px;top:848.95px;font-size:14px;line-height:19px;color:#606060;z-index:3;letter-spacing:0.300px;">Calling</span>
<span class="t" style="left:37.50px;top:884.95px;font-size:14px;line-height:19px;color:#606060;z-index:3;letter-spacing:0.574px;">Vidcast</span>
<span class="t" style="left:37.50px;top:920.95px;font-size:14px;line-height:19px;color:#606060;z-index:3;letter-spacing:0.629px;">Hybrid</span>
<span class="t" style="left:258.00px;top:78.98px;font-size:24px;line-height:32px;color:#121212;z-index:3;font-weight:700;letter-spacing:0.241px;">Analysen</span>
<span class="t" style="left:290.70px;top:137.26px;font-size:16px;line-height:21px;color:#121212;z-index:3;letter-spacing:0.514px;">Meine Dashboards</span>
<span class="t" style="left:493.60px;top:137.46px;font-size:16px;line-height:21px;color:#5a5a5a;z-index:3;letter-spacing:0.725px;">Meetings</span>
<span class="t" style="left:624.60px;top:137.46px;font-size:16px;line-height:21px;color:#5a5a5a;z-index:3;letter-spacing:0.616px;">Messaging</span>
<span class="t" style="left:768.30px;top:137.46px;font-size:16px;line-height:21px;color:#5a5a5a;z-index:3;letter-spacing:0.264px;">Calling</span>
<span class="t" style="left:880.30px;top:137.46px;font-size:16px;line-height:21px;color:#5a5a5a;z-index:3;letter-spacing:0.317px;">Geräte</span>
<span class="t" style="left:994.30px;top:137.46px;font-size:16px;line-height:21px;color:#5a5a5a;z-index:3;letter-spacing:0.666px;">Arbeitsbereiche</span>
<span class="t" style="left:1176.20px;top:137.46px;font-size:16px;line-height:21px;color:#5a5a5a;z-index:3;letter-spacing:0.615px;">Nachhaltigkeit</span>
<span class="t" style="left:261.20px;top:177.65px;font-size:14px;line-height:19px;color:#121212;z-index:3;letter-spacing:0.401px;">Summary</span>
<span class="t" style="left:1740.00px;top:176.85px;font-size:14px;line-height:19px;color:#ffffff;z-index:3;font-weight:700;letter-spacing:0.032px;">Widgets hinzufügen</span>
<span class="t" style="left:1922.00px;top:176.65px;font-size:14px;line-height:19px;color:#333333;z-index:3;letter-spacing:0.500px;">placetel-538.webex....</span>
<span class="t" style="left:2168.00px;top:176.95px;font-size:14px;line-height:19px;color:#121212;z-index:3;font-weight:700;letter-spacing:0.570px;">Letzte 365 Tage</span>
<span class="t" style="left:2305.00px;top:176.65px;font-size:14px;line-height:19px;color:#121212;z-index:3;letter-spacing:0.381px;">12/14/2022</span>
<span class="t" style="left:2425.00px;top:176.65px;font-size:14px;line-height:19px;color:#121212;z-index:3;letter-spacing:0.426px;">12/13/2023</span>
<span class="t" style="left:286.40px;top:252.42px;font-size:21px;line-height:28px;color:#121212;z-index:3;letter-spacing:0.261px;">Calling Übersicht</span>
<span class="t" style="left:282.50px;top:322.75px;font-size:14px;line-height:19px;color:#121212;z-index:6;letter-spacing:0.531px;">Eingehende Anrufe in Anrufwarteschlangen</span>
<span class="t" style="left:561.55px;top:466.11px;font-size:30px;line-height:39px;color:#121212;z-index:6;letter-spacing:0.531px;">38</span>
<span class="t" style="left:565.20px;top:502.30px;font-size:13px;line-height:17px;color:#5a5a5a;z-index:6;letter-spacing:-0.015px;">Total</span>
<span class="t" style="left:932.60px;top:469.50px;font-size:13px;line-height:17px;color:#555555;z-index:6;letter-spacing:-0.181px;">Abandoned calls</span>
<span class="t" style="left:1032.40px;top:469.50px;font-size:13px;line-height:17px;color:#555555;z-index:6;letter-spacing:-0.222px;">23 (60.53%)</span>
<span class="t" style="left:932.60px;top:499.40px;font-size:13px;line-height:17px;color:#555555;z-index:6;letter-spacing:-0.233px;">Answered calls</span>
<span class="t" style="left:1032.40px;top:499.40px;font-size:13px;line-height:17px;color:#555555;z-index:6;letter-spacing:-0.422px;">15 (39.47%)</span>
<span class="t" style="left:282.50px;top:682.85px;font-size:14px;line-height:19px;color:#121212;z-index:6;letter-spacing:0.452px;">Call Leg-Qualität</span>
<span class="t" style="left:321.20px;top:833.87px;font-size:20px;line-height:26px;color:#121212;z-index:7;letter-spacing:-1.385px;">151</span>
<span class="t" style="left:319.60px;top:858.63px;font-size:8px;line-height:11px;color:#5a5a5a;z-index:7;letter-spacing:0.181px;">Call Legs</span>
<span class="t" style="left:449.30px;top:827.80px;font-size:13px;line-height:17px;color:#555555;z-index:6;letter-spacing:-0.534px;">Good</span>
<span class="t" style="left:449.30px;top:857.70px;font-size:13px;line-height:17px;color:#555555;z-index:6;letter-spacing:-0.620px;">Poor</span>
<span class="t" style="left:620.50px;top:682.85px;font-size:14px;line-height:19px;color:#121212;z-index:6;letter-spacing:0.527px;">Verteilung der Anrufe nach Stunde</span>
<span class="t" style="left:622.14px;top:765.95px;font-size:14px;line-height:19px;color:#555555;z-index:6;">100</span>
<span class="t" style="left:629.93px;top:844.25px;font-size:14px;line-height:19px;color:#555555;z-index:6;">50</span>
<span class="t" style="left:637.71px;top:922.65px;font-size:14px;line-height:19px;color:#555555;z-index:6;">0</span>
<span class="t" style="left:671.85px;top:942.95px;font-size:14px;line-height:19px;color:#555555;z-index:6;letter-spacing:0.616px;">06:00</span>
<span class="t" style="left:773.15px;top:942.95px;font-size:14px;line-height:19px;color:#555555;z-index:6;letter-spacing:0.616px;">08:00</span>
<span class="t" style="left:874.65px;top:942.95px;font-size:14px;line-height:19px;color:#555555;z-index:6;letter-spacing:0.616px;">10:00</span>
<span class="t" style="left:976.25px;top:942.95px;font-size:14px;line-height:19px;color:#555555;z-index:6;letter-spacing:0.616px;">13:00</span>
<span class="t" style="left:1077.55px;top:942.95px;font-size:14px;line-height:19px;color:#555555;z-index:6;letter-spacing:0.616px;">15:00</span>
<span class="t" style="left:859.00px;top:976.40px;font-size:13px;line-height:17px;color:#555555;z-index:6;letter-spacing:-0.128px;">Total calls</span>
<span class="t" style="left:1183.30px;top:682.85px;font-size:14px;line-height:19px;color:#121212;z-index:6;letter-spacing:0.530px;">Anrufe insgesamt</span>
<span class="t" style="left:1193.50px;top:728.00px;font-size:13px;line-height:17px;color:#777777;z-index:8;letter-spacing:-0.318px;">Täglich</span>
<span class="t" style="left:1261.70px;top:728.00px;font-size:13px;line-height:17px;color:#333333;z-index:8;letter-spacing:-0.091px;">Wöchentlich</span>
<span class="t" style="left:1359.50px;top:728.00px;font-size:13px;line-height:17px;color:#333333;z-index:8;letter-spacing:-0.042px;">Monatlich</span>
<span class="t" style="left:1185.64px;top:765.85px;font-size:14px;line-height:19px;color:#555555;z-index:6;">150</span>
<span class="t" style="left:1185.64px;top:818.15px;font-size:14px;line-height:19px;color:#555555;z-index:6;">100</span>
<span class="t" style="left:1193.43px;top:870.45px;font-size:14px;line-height:19px;color:#555555;z-index:6;">50</span>
<span class="t" style="left:1201.21px;top:922.65px;font-size:14px;line-height:19px;color:#555555;z-index:6;">0</span>
<span class="t" style="left:1271.38px;top:943.15px;font-size:14px;line-height:19px;color:#555555;z-index:6;">1/01</span>
<span class="t" style="left:1384.98px;top:943.15px;font-size:14px;line-height:19px;color:#555555;z-index:6;">6/01</span>
<span class="t" style="left:1498.58px;top:943.15px;font-size:14px;line-height:19px;color:#555555;z-index:6;">8/01</span>
<span class="t" style="left:1612.58px;top:943.15px;font-size:14px;line-height:19px;color:#555555;z-index:6;">9/01</span>
<span class="t" style="left:1722.28px;top:943.15px;font-size:14px;line-height:19px;color:#555555;z-index:6;">10/01</span>
<span class="t" style="left:1835.98px;top:943.15px;font-size:14px;line-height:19px;color:#555555;z-index:6;">12/01</span>
<span class="t" style="left:1549.00px;top:976.20px;font-size:13px;line-height:17px;color:#555555;z-index:6;letter-spacing:-0.040px;">Total</span>
<span class="t" style="left:282.50px;top:1042.85px;font-size:14px;line-height:19px;color:#121212;z-index:6;letter-spacing:0.532px;">Ausgehende Anrufe insgesamt nach Typ</span>
<span class="t" style="left:301.60px;top:1104.90px;font-size:15px;line-height:20px;color:#555555;z-index:6;letter-spacing:-0.047px;">Internal</span>
<span class="t" style="left:297.10px;top:1128.70px;font-size:15px;line-height:20px;color:#555555;z-index:6;letter-spacing:-0.119px;">National</span>
<span class="t" style="left:289.50px;top:1152.90px;font-size:15px;line-height:20px;color:#555555;z-index:6;letter-spacing:-0.122px;">Unknown</span>
<span class="t" style="left:1409.30px;top:1043.05px;font-size:14px;line-height:19px;color:#121212;z-index:6;letter-spacing:0.526px;">Gesamte Anrufe nach Standort</span>
<span class="t" style="left:1653.70px;top:387.95px;font-size:14px;line-height:19px;color:#121212;z-index:22;letter-spacing:0.475px;">Call Legs nach Endpunkttyp</span>
<span class="t" style="left:1664.16px;top:433.84px;font-size:12px;line-height:16px;color:#121212;z-index:23;">#</span>
<span class="t" style="left:1698.67px;top:433.84px;font-size:12px;line-height:16px;color:#333333;z-index:23;">%</span>
<span class="t" style="left:1720.00px;top:482.80px;font-size:15px;line-height:20px;color:#555555;z-index:22;letter-spacing:-0.380px;">Desk Phone</span>
<span class="t" style="left:1657.00px;top:509.80px;font-size:15px;line-height:20px;color:#555555;z-index:22;letter-spacing:-0.102px;">Webex App (Android)</span>
<span class="t" style="left:1649.30px;top:536.60px;font-size:15px;line-height:20px;color:#555555;z-index:22;letter-spacing:-0.182px;">Webex App (Windows)</span>
<span class="t" style="left:1804.11px;top:652.65px;font-size:14px;line-height:19px;color:#555555;z-index:22;">0</span>
<span class="t" style="left:1950.21px;top:652.65px;font-size:14px;line-height:19px;color:#555555;z-index:22;">50</span>
<span class="t" style="left:2096.32px;top:652.65px;font-size:14px;line-height:19px;color:#555555;z-index:22;">100</span>
<span class="t" style="left:1855.80px;top:685.80px;font-size:13px;line-height:17px;color:#555555;z-index:22;letter-spacing:-0.534px;">Good</span>
<span class="t" style="left:1928.60px;top:685.80px;font-size:13px;line-height:17px;color:#555555;z-index:22;letter-spacing:-0.353px;">Poor</span>
</body></html>
